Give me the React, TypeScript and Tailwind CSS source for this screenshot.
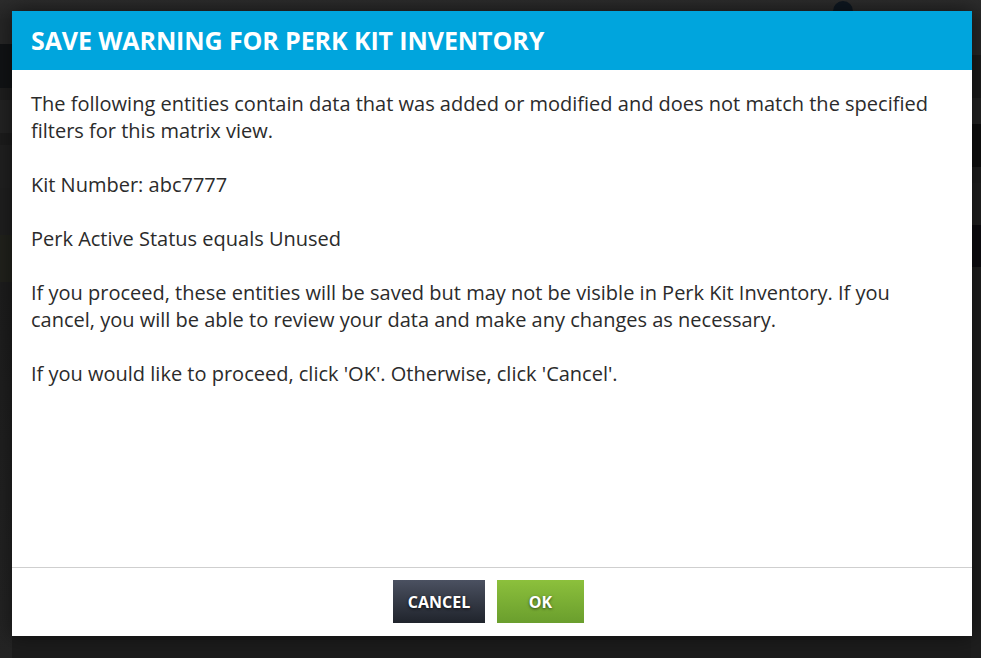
import React from "react";

const font = { fontFamily: '"Open Sans", "Liberation Sans", sans-serif' };

function Backdrop() {
  return (
    <div className="flex h-[658px] w-[981px] flex-col bg-[#1c1c1c]">
      <div className="flex h-[20px] items-start bg-gradient-to-b from-[#2c2c2c] to-[#262626] pl-[833px]">
        <div className="mt-[1px] h-[20px] w-[20px] rounded-full bg-[#0e1720]" />
      </div>
      <div className="flex flex-1">
        <div className="flex w-[12px] flex-col">
          <div className="h-[24px] bg-[#262626]" />
          <div className="h-[44px] bg-[#111315]" />
          <div className="h-[12px] bg-[#1e1e1e]" />
          <div className="h-[33px] bg-[#232323]" />
          <div className="h-[12px] bg-[#1c1c1c]" />
          <div className="h-[43px] bg-[#202020]" />
          <div className="h-[47px] bg-[#1f1f1f]" />
          <div className="h-[47px] bg-[#21221c]" />
          <div className="flex-1 bg-gradient-to-b from-[#1d1d1d] to-[#242424]" />
        </div>
        <div className="flex-1" />
        <div className="flex w-[10px] flex-col">
          <div className="h-[35px] bg-[#262626]" />
          <div className="h-[43px] bg-[#1b1b1b]" />
          <div className="h-[26px] bg-[#222222]" />
          <div className="h-[43px] bg-[#0e0e0e]" />
          <div className="h-[16px] bg-[#1d1d1d]" />
          <div className="h-[42px] bg-[#1f1f1f]" />
          <div className="h-[42px] bg-[#0d0c10]" />
          <div className="flex-1 bg-[#1e1e1e]" />
        </div>
      </div>
    </div>
  );
}

export default function App() {
  return (
    <div className="relative h-[658px] w-[981px] overflow-hidden" style={font}>
      <Backdrop />
      <div className="absolute left-[12px] top-[11px] flex h-[625px] w-[960px] flex-col bg-white shadow-[0_0_20px_rgba(0,0,0,0.5)]">
        <div className="flex h-[59px] items-center bg-[#00a5dd] px-[19px]">
          <h1 className="text-[25px] font-bold leading-none tracking-[-0.1px] text-white">
            SAVE WARNING FOR PERK KIT INVENTORY
          </h1>
        </div>
        <div className="flex-1 px-[19px] pt-[20px] text-[20px] leading-[27px] text-[#2b2b2b]">
          <p className="mb-[27px]">
            The following entities contain data that was added or modified and does not match the specified filters for this matrix view.
          </p>
          <p className="mb-[27px]">Kit Number: abc7777</p>
          <p className="mb-[27px]">Perk Active Status equals Unused</p>
          <p className="mb-[27px]">
            If you proceed, these entities will be saved but may not be visible in Perk Kit Inventory. If you cancel, you will be able to review your data and make any changes as necessary.
          </p>
          <p>If you would like to proceed, click 'OK'. Otherwise, click 'Cancel'.</p>
        </div>
        <div className="flex h-[69px] justify-center gap-[12px] border-t border-[#cfcfcf] pt-[12px] pr-[7px]">
          <button className="h-[43px] w-[92px] bg-gradient-to-b from-[#4b5161] to-[#20242c] text-[16px] font-bold text-white [text-shadow:0_1px_3px_rgba(0,0,0,0.8)]">
            CANCEL
          </button>
          <button className="h-[43px] w-[87px] bg-gradient-to-b from-[#8cc03c] to-[#6a9e2d] text-[16px] font-bold text-white [text-shadow:0_1px_3px_rgba(0,0,0,0.6)]">
            OK
          </button>
        </div>
      </div>
    </div>
  );
}
